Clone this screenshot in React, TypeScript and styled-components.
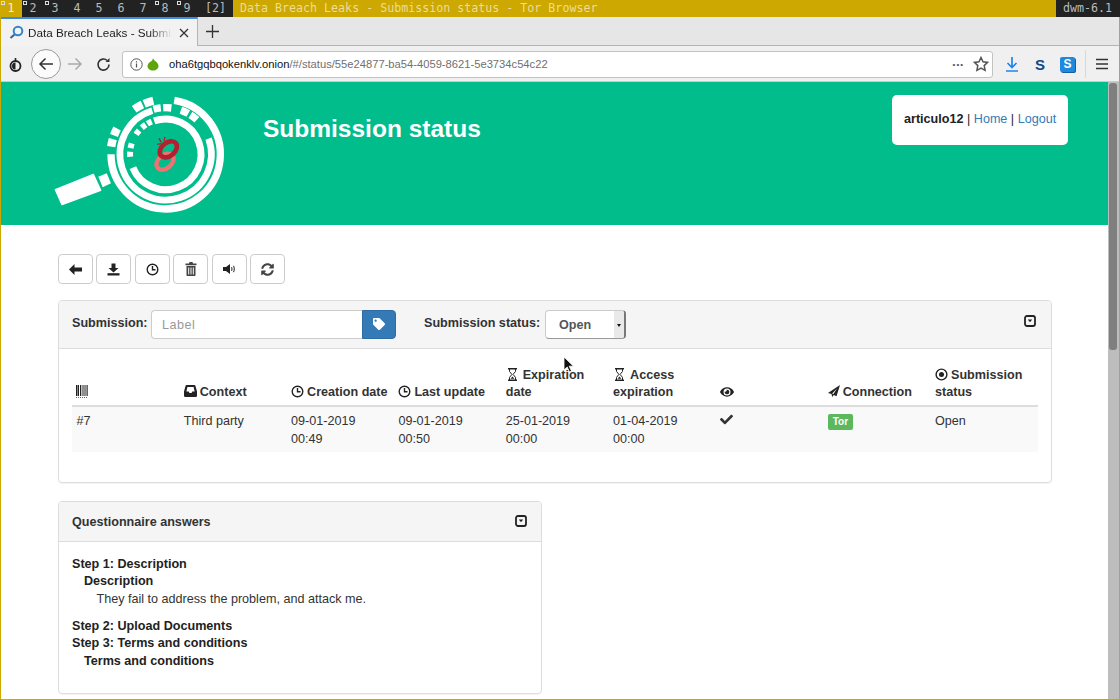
import React from "react";
import styled, { createGlobalStyle } from "styled-components";
import { FaCheck, FaEye, FaSyncAlt, FaTag } from "react-icons/fa";

const GlobalStyle = createGlobalStyle`
  html, body {
    margin: 0;
    padding: 0;
    overflow: hidden;
  }
  * {
    box-sizing: border-box;
  }
  body {
    font-family: "Liberation Sans", Arial, sans-serif;
    font-size: 12.6px;
    color: #333;
  }
`;

const tags = [
  { n: "1", on: true, used: true },
  { n: "2", used: true },
  { n: "3", used: true },
  { n: "4" },
  { n: "5" },
  { n: "6" },
  { n: "7" },
  { n: "8", used: true },
  { n: "9", used: true },
];

const columns = [
  { icon: <BarcodeIcon />, label: "" },
  { icon: <InboxIcon />, label: "Context" },
  { icon: <ClockIcon />, label: "Creation date" },
  { icon: <ClockIcon />, label: "Last update" },
  { icon: <HourglassIcon />, label: "Expiration date" },
  { icon: <HourglassIcon />, label: "Access expiration" },
  { icon: <FaEye size={14} />, label: "" },
  { icon: <SendIcon />, label: "Connection" },
  { icon: <RecordIcon />, label: "Submission status" },
];

function polar(r: number, deg: number) {
  const a = ((deg - 90) * Math.PI) / 180;
  return `${(377 + r * Math.cos(a)).toFixed(1)} ${(208 + r * Math.sin(a)).toFixed(1)}`;
}

function arc(r: number, from: number, to: number) {
  const large = to - from > 180 ? 1 : 0;
  return `M${polar(r, from)} A${r} ${r} 0 ${large} 1 ${polar(r, to)}`;
}

const logoArcs = [
  { r: 164, w: 22, from: 9, to: 270 },
  { r: 137, w: 20, from: 70, to: 343 },
  { r: 106, w: 21, from: 341, to: 608 },
  { r: 165, w: 24, from: 325, to: 335 },
  { r: 165, w: 24, from: 337, to: 347 },
  { r: 165, w: 25, from: 290, to: 298 },
  { r: 165, w: 25, from: 278, to: 286 },
  { r: 140, w: 22, from: 345, to: 354 },
  { r: 140, w: 22, from: 357, to: 367 },
  { r: 140, w: 22, from: 19, to: 29 },
  { r: 140, w: 22, from: 32, to: 42 },
  { r: 107, w: 18, from: 266, to: 274 },
  { r: 107, w: 18, from: 280, to: 288 },
  { r: 107, w: 18, from: 304, to: 312 },
  { r: 107, w: 18, from: 318, to: 326 },
  { r: 107, w: 18, from: 329, to: 337 },
];

function Logo() {
  return (
    <svg width="200" height="135" viewBox="0 0 600 405">
      {logoArcs.map((a, i) => (
        <path key={i} d={arc(a.r, a.from, a.to)} fill="none" stroke="#fff" strokeWidth={a.w} />
      ))}
      <path d="M46 314 L160 268 L182 316 L66 359 Z" fill="#fff" stroke="#fff" strokeWidth="4" strokeLinejoin="round" />
      <path d="M175 275 L200 265 L213 295 L188 307 Z" fill="#fff" />
      <ellipse cx="375" cy="230" rx="29" ry="20" transform="rotate(-40 375 230)" fill="none" stroke="#ee7272" strokeWidth="13" />
      <ellipse cx="385" cy="193" rx="29" ry="20" transform="rotate(-40 385 193)" fill="none" stroke="#b3202e" strokeWidth="14" />
      <path d="M357 160 L364 172 M375 156 L372 168 M351 178 L364 176" stroke="#b3202e" strokeWidth="4" />
    </svg>
  );
}

function ClockIcon() {
  return (
    <svg width="13" height="13" viewBox="0 0 13 13" fill="none" stroke="currentColor" strokeWidth="1.4">
      <circle cx="6.5" cy="6.5" r="5.3" />
      <path d="M6.5 3v3.8h3" />
    </svg>
  );
}

function HourglassIcon() {
  return (
    <svg width="14" height="13" viewBox="-1 0 14 13" fill="none" stroke="currentColor" strokeWidth="1">
      <path d="M1 .8h9M1 12.2h9" strokeWidth="1.4" />
      <path d="M2.5 1v2.400l2.400 3-2.400 3V12M8.500 1v2.400l-2.400 3 2.400 3V12" />
      <path d="M3.500 10.800l2-2.400 2 2.400z" fill="currentColor" stroke="none" />
    </svg>
  );
}

function InboxIcon() {
  return (
    <svg width="13" height="12" viewBox="0 0 13 12">
      <path
        d="M2.600 0h7.800c.5 0 .8.3 1 .7L13 6.500v4c0 .8-.5 1.500-1.200 1.500H1.200C.5 12 0 11.300 0 10.500v-4L1.600.7c.2-.4.5-.7 1-.7zM3.400 2 2.400 6.500h2.400l.6 1.500h2.200l.6-1.500h2.400L9.600 2z"
        fill="currentColor"
        fillRule="evenodd"
      />
    </svg>
  );
}

function RecordIcon() {
  return (
    <svg width="13" height="13" viewBox="0 0 13 13">
      <circle cx="6.5" cy="6.5" r="5.4" fill="none" stroke="currentColor" strokeWidth="1.4" />
      <circle cx="6.5" cy="6.5" r="2.5" fill="currentColor" />
    </svg>
  );
}

function BarcodeIcon() {
  return (
    <svg width="12" height="13" viewBox="0 0 12 13" fill="none" stroke="#222">
      <path d="M.5 0v11M2.500 0v11M4.500 0v11M7 0v11M9 0v11M11.200 0v11" />
      <path d="M1.500 0v11M6 0v11M10.200 0v11" stroke="#888" />
      <path d="M0 12.500h12" stroke="#666" strokeDasharray="1 1" />
    </svg>
  );
}

function SendIcon() {
  return (
    <svg width="12" height="12" viewBox="0 0 12 12">
      <path d="M12 0 0 8l3.500 1L4.200 12l1.600-2 2.700 1.300zM4.200 8.600 9 3.500 5.300 9.300z" fill="currentColor" fillRule="evenodd" />
    </svg>
  );
}

function CollapseIcon() {
  return (
    <svg width="12" height="12" viewBox="0 0 12 12">
      <rect x="1" y="1" width="10" height="10" rx="2" fill="none" stroke="#222" strokeWidth="1.8" />
      <path d="M3.800 4.500h4.400L6 7.300z" fill="#222" />
    </svg>
  );
}

function ArrowLeftIcon() {
  return (
    <svg width="13" height="11" viewBox="0 0 13 11" fill="currentColor">
      <path d="M0 5.500 5.500 0v3.500H13v4H5.500V11z" />
    </svg>
  );
}

function DownloadIcon() {
  return (
    <svg width="13" height="13" viewBox="0 0 13 13" fill="currentColor">
      <path d="M4.500.5h4V5h3L6.500 9.600 1.500 5h3z" />
      <rect x="0.500" y="10.200" width="12" height="2.300" />
    </svg>
  );
}

function TrashIcon() {
  return (
    <svg width="12" height="14" viewBox="0 0 12 14" fill="currentColor">
      <path d="M4.500 0h3l.5 1.500h3.500v1.700H.5V1.500H4zM1.500 4h9v9c0 .6-.4 1-1 1h-7c-.6 0-1-.4-1-1zM3.200 5.500v7h1v-7zm2.300 0v7h1v-7zm2.300 0v7h1v-7z" fillRule="evenodd" />
    </svg>
  );
}

function VolumeIcon() {
  return (
    <svg width="13" height="10" viewBox="0 0 13 10" fill="none">
      <path d="M0 3h3l4-3v10L3 7H0z" fill="currentColor" />
      <path d="M8.500 3c.6.6.6 3.400 0 4M10.500 1.800c1 1.400 1 5 0 6.400" stroke="currentColor" />
    </svg>
  );
}

function OnionIcon({ color }: { color: string }) {
  return (
    <svg width="14" height="14" viewBox="0 0 14 14">
      <path d="M7 1c.4 1.500 1.400 2.500 2.800 3.600C11.500 6 12.500 7.400 12.500 9c0 2.700-2.400 4.500-5.500 4.500S1.500 11.700 1.500 9c0-2.200 2-3.800 4-5C6.300 3.400 6.800 2.300 7 1z" fill={color} />
    </svg>
  );
}

export default function App() {
  return (
    <>
      <GlobalStyle />
      <Screen>
        <StatusBar>
          <Tags>
            {tags.map((t) => (
              <Tag key={t.n} $on={t.on}>
                {t.used && <TagMark />}
                {t.n}
              </Tag>
            ))}
            <Layout>[2]</Layout>
          </Tags>
          <WindowTitle>Data Breach Leaks - Submission status - Tor Browser</WindowTitle>
          <WmName>dwm-6.1</WmName>
        </StatusBar>

        <Browser>
          <TabStrip>
            <ActiveTab>
              <svg width="15" height="15" viewBox="0 0 15 15" fill="none">
                <circle cx="9" cy="6" r="4.3" stroke="#2f86c9" strokeWidth="2" />
                <path d="M5.500 9.500 1.500 13" stroke="#3568a8" strokeWidth="2.200" />
              </svg>
              <TabTitle>Data Breach Leaks - Submis</TabTitle>
              <TabClose viewBox="0 0 10 10">
                <path d="M1 1l8 8M9 1l-8 8" stroke="#333" strokeWidth="1.300" />
              </TabClose>
            </ActiveTab>
            <NewTab viewBox="0 0 13 13">
              <path d="M6.500 0v13M0 6.500h13" stroke="#333" strokeWidth="1.300" />
            </NewTab>
          </TabStrip>

          <NavBar>
            <svg width="15" height="15" viewBox="0 0 15 15" fill="none">
              <circle cx="7.500" cy="9" r="5" stroke="#222" strokeWidth="1.800" />
              <path d="M7.500 5.500a3.500 3.500 0 0 0 0 7z" fill="#222" />
              <path d="M7.500 1v3" stroke="#222" strokeWidth="1.600" />
            </svg>
            <BackButton>
              <svg width="16" height="14" viewBox="0 0 16 14" fill="none" stroke="#333" strokeWidth="1.500">
                <path d="M15 7H2M7.500 1.500 2 7l5.500 5.500" />
              </svg>
            </BackButton>
            <ForwardIcon width="16" height="14" viewBox="0 0 16 14" fill="none" stroke="#aaa" strokeWidth="1.500">
              <path d="M1 7h13M8.500 1.500 14 7l-5.500 5.500" />
            </ForwardIcon>
            <ReloadIcon width="15" height="15" viewBox="0 0 15 15" fill="none" stroke="#333" strokeWidth="1.600">
              <path d="M13 7.500a5.500 5.500 0 1 1-1.800-4" />
              <path d="M13.500 1v4h-4" fill="#333" stroke="none" />
            </ReloadIcon>
            <UrlBar>
              <svg width="13" height="13" viewBox="0 0 13 13" fill="none">
                <circle cx="6.500" cy="6.500" r="5.700" stroke="#555" />
                <path d="M6.500 5.500v4M6.500 3.200v1.200" stroke="#555" strokeWidth="1.200" />
              </svg>
              <OnionIcon color="#5da40f" />
              <UrlText>
                oha6tgqbqokenklv.onion<UrlPath>/#/status/55e24877-ba54-4059-8621-5e3734c54c22</UrlPath>
              </UrlText>
              <UrlDots>•••</UrlDots>
              <svg width="16" height="16" viewBox="0 0 16 16" fill="none" stroke="#555" strokeWidth="1.500">
                <path d="M8 1.500l2 4.300 4.600.6-3.400 3.200.9 4.700L8 12l-4.100 2.300.9-4.700L1.400 6.400 6 5.800z" />
              </svg>
            </UrlBar>
            <ToolIcons>
              <svg width="14" height="15" viewBox="0 0 14 15" fill="none" stroke="#1c86ee" strokeWidth="1.700">
                <path d="M7 0v10M2.500 6 7 10.500 11.500 6M1 14h12" />
              </svg>
              <PlainS>S</PlainS>
              <SquareS>S</SquareS>
              <ToolDivider />
              <Hamburger viewBox="0 0 12 12">
                <path d="M0 1.500h12M0 6h12M0 10.500h12" stroke="#333" strokeWidth="1.400" />
              </Hamburger>
            </ToolIcons>
          </NavBar>

          <Viewport>
            <Page>
              <Header>
                <LogoWrap>
                  <Logo />
                </LogoWrap>
                <PageTitle>Submission status</PageTitle>
                <UserBox>
                  <b>articulo12</b> | <UserLink>Home</UserLink> | <UserLink>Logout</UserLink>
                </UserBox>
              </Header>

              <Content>
                <ActionRow>
                  <ActionButton><ArrowLeftIcon /></ActionButton>
                  <ActionButton><DownloadIcon /></ActionButton>
                  <ActionButton><ClockIcon /></ActionButton>
                  <ActionButton $muted><TrashIcon /></ActionButton>
                  <ActionButton><VolumeIcon /></ActionButton>
                  <ActionButton $muted><FaSyncAlt size={13} /></ActionButton>
                </ActionRow>

                <Card>
                  <SubmissionHeader>
                    <FormLabel>Submission:</FormLabel>
                    <LabelField>
                      <LabelInput>Label</LabelInput>
                      <TagButton><FaTag size={12} /></TagButton>
                    </LabelField>
                    <StatusLabel>Submission status:</StatusLabel>
                    <SelectBox>
                      <SelectValue>Open</SelectValue>
                      <SelectArrow />
                    </SelectBox>
                    <HeaderToggle $lift={6}><CollapseIcon /></HeaderToggle>
                  </SubmissionHeader>
                  <TableBody>
                    <StatusTable>
                      <thead>
                        <tr>
                          {columns.map((c, i) => (
                            <HeadCell key={i}>
                              <HeadIcon>{c.icon}</HeadIcon>
                              {c.label}
                            </HeadCell>
                          ))}
                        </tr>
                      </thead>
                      <tbody>
                        <tr>
                          <Cell>#7</Cell>
                          <Cell>Third party</Cell>
                          <Cell>09-01-2019<br />00:49</Cell>
                          <Cell>09-01-2019<br />00:50</Cell>
                          <Cell>25-01-2019<br />00:00</Cell>
                          <Cell>01-04-2019<br />00:00</Cell>
                          <Cell><FaCheck size={13} /></Cell>
                          <Cell><TorBadge>Tor</TorBadge></Cell>
                          <Cell>Open</Cell>
                        </tr>
                      </tbody>
                    </StatusTable>
                  </TableBody>
                </Card>

                <AnswersCard>
                  <AnswersHeader>
                    <AnswersTitle>Questionnaire answers</AnswersTitle>
                    <HeaderToggle $lift={1}><CollapseIcon /></HeaderToggle>
                  </AnswersHeader>
                  <AnswersBody>
                    <StepTitle>Step 1: Description</StepTitle>
                    <Question>Description</Question>
                    <Answer>They fail to address the problem, and attack me.</Answer>
                    <StepTitle>Step 2: Upload Documents</StepTitle>
                    <StepTitle>Step 3: Terms and conditions</StepTitle>
                    <Question>Terms and conditions</Question>
                  </AnswersBody>
                </AnswersCard>
              </Content>
            </Page>
            <Scrollbar>
              <ScrollThumb />
            </Scrollbar>
            <MouseCursor width="12" height="18" viewBox="0 0 12 18">
              <path d="M1 1v13l3.200-3 2.300 5 2-1-2.300-4.800H10.500z" fill="#111" stroke="#fff" strokeWidth="0.800" />
            </MouseCursor>
          </Viewport>
        </Browser>
      </Screen>
    </>
  );
}

const Screen = styled.div`
  width: 1120px;
  height: 700px;
  display: flex;
  flex-direction: column;
  background: #cca800;
  overflow: hidden;
`;

const StatusBar = styled.div`
  height: 17px;
  flex: none;
  display: flex;
  font-family: "DejaVu Sans Mono", monospace;
  font-size: 11.65px;
  line-height: 17px;
`;

const Tags = styled.div`
  width: 233px;
  display: flex;
  background: #222;
  color: #bbb;
`;

const Tag = styled.div<{ $on?: boolean }>`
  position: relative;
  width: 22px;
  text-align: center;
  background: ${(p) => (p.$on ? "#cca800" : "transparent")};
  color: ${(p) => (p.$on ? "#eee" : "#bbb")};
`;

const TagMark = styled.span`
  position: absolute;
  top: 1px;
  left: 1px;
  width: 4px;
  height: 4px;
  border: 1px solid #ddd;
`;

const Layout = styled.div`
  margin-left: 7px;
`;

const WindowTitle = styled.div`
  flex: 1;
  padding-left: 7px;
  color: #eedc96;
`;

const WmName = styled.div`
  width: 64px;
  padding-left: 7px;
  background: #222;
  color: #bbb;
`;

const Browser = styled.div`
  flex: 1;
  min-height: 0;
  margin: 0 1px 1px;
  display: flex;
  flex-direction: column;
  background: #fff;
`;

const TabStrip = styled.div`
  height: 29px;
  flex: none;
  display: flex;
  align-items: center;
  background: #e6e6e6;
  border-bottom: 1px solid #b4b4b4;
`;

const ActiveTab = styled.div`
  width: 197px;
  height: 29px;
  display: flex;
  align-items: center;
  gap: 4px;
  padding: 1px 8px 0;
  background: #f2f2f2;
  border-top: 2px solid #3e8ae0;
  border-right: 1px solid #b4b4b4;
  font-size: 11.7px;
  color: #222;
`;

const TabTitle = styled.span`
  flex: 1;
  min-width: 0;
  white-space: nowrap;
  mask-image: linear-gradient(to right, #000 82%, transparent 98%);
`;

const TabClose = styled.svg`
  width: 10px;
  height: 10px;
  flex: none;
`;

const NewTab = styled.svg`
  width: 13px;
  height: 13px;
  margin-left: 8px;
`;

const NavBar = styled.div`
  height: 36px;
  flex: none;
  display: flex;
  align-items: center;
  padding: 1px 0 0 7px;
  background: #f0f0f0;
  border-bottom: 1px solid #ccc;
`;

const BackButton = styled.div`
  width: 30px;
  height: 30px;
  margin-left: 8px;
  display: flex;
  align-items: center;
  justify-content: center;
  background: #fbfbfb;
  border: 1px solid #9a9a9a;
  border-radius: 50%;
`;

const ForwardIcon = styled.svg`
  margin-left: 6px;
`;

const ReloadIcon = styled.svg`
  margin-left: 13px;
`;

const UrlBar = styled.div`
  width: 871px;
  height: 27px;
  margin-left: 11px;
  display: flex;
  align-items: center;
  gap: 3px;
  padding: 0 3px 0 7px;
  background: #fff;
  border: 1px solid #c2c2c2;
  border-radius: 3px;
`;

const UrlText = styled.div`
  flex: 1;
  margin-left: 6px;
  font-size: 11.2px;
  color: #111;
  white-space: nowrap;
`;

const UrlPath = styled.span`
  color: #707070;
`;

const UrlDots = styled.span`
  margin-right: 6px;
  font-size: 8px;
  letter-spacing: 1px;
  color: #555;
`;

const ToolIcons = styled.div`
  display: flex;
  align-items: center;
  margin-left: 12px;
`;

const PlainS = styled.span`
  width: 16px;
  margin-left: 13px;
  font-size: 15px;
  font-weight: 700;
  text-align: center;
  color: #0d4a8c;
`;

const SquareS = styled.span`
  width: 15px;
  height: 15px;
  margin-left: 12px;
  background: #2189dd;
  box-shadow: 1px 1px 0 #135f9f;
  border-radius: 2px;
  color: #fff;
  font-size: 12px;
  font-weight: 700;
  line-height: 15px;
  text-align: center;
`;

const ToolDivider = styled.span`
  width: 1px;
  height: 28px;
  margin-left: 10px;
  background: #d8d8d8;
`;

const Hamburger = styled.svg`
  width: 12px;
  height: 12px;
  margin-left: 10px;
`;

const Viewport = styled.div`
  position: relative;
  flex: 1;
  min-height: 0;
  display: flex;
`;

const Page = styled.div`
  flex: 1;
  min-width: 0;
  overflow: hidden;
`;

const Scrollbar = styled.div`
  width: 11px;
  flex: none;
  padding: 0 1px;
  background: #bdbdbd;
`;

const ScrollThumb = styled.div`
  width: 8px;
  height: 267px;
  margin-top: 1px;
  background: #7f7f7f;
  border-radius: 3px;
`;

const MouseCursor = styled.svg`
  position: absolute;
  left: 562px;
  top: 274px;
`;

const Header = styled.header`
  height: 143px;
  display: flex;
  align-items: flex-start;
  background: #00bd8b;
`;

const LogoWrap = styled.div`
  width: 262px;
  padding: 3px 0 0 39px;
`;

const PageTitle = styled.h1`
  flex: 1;
  margin: 33px 0 0;
  font-size: 24.5px;
  font-weight: 700;
  line-height: 28px;
  color: #fff;
`;

const UserBox = styled.div`
  width: 176px;
  height: 50px;
  margin: 13px 40px 0 0;
  padding: 15.5px 12px;
  background: #fff;
  border-radius: 5px;
  color: #222;
  line-height: 17.5px;
  white-space: nowrap;
`;

const UserLink = styled.a`
  color: #337ab7;
`;

const Content = styled.main`
  padding: 29px 56px 0 57px;
`;

const ActionRow = styled.div`
  display: flex;
  gap: 3.4px;
  margin-bottom: 16px;
`;

const ActionButton = styled.button<{ $muted?: boolean }>`
  width: 35px;
  height: 30px;
  padding: 0;
  display: flex;
  align-items: center;
  justify-content: center;
  background: #fff;
  border: 1px solid #ccc;
  border-radius: 4px;
  color: ${(p) => (p.$muted ? "#444" : "#222")};
`;

const Card = styled.section`
  border: 1px solid #ddd;
  border-radius: 4px;
  box-shadow: 0 1px 1px rgba(0, 0, 0, 0.05);
  overflow: hidden;
`;

const SubmissionHeader = styled.div`
  height: 48px;
  display: flex;
  align-items: center;
  padding: 0 15px 1px 13px;
  background: #f5f5f5;
  border-bottom: 1px solid #ddd;
`;

const FormLabel = styled.span`
  width: 79px;
  margin-top: -3px;
  font-weight: 700;
`;

const LabelField = styled.div`
  display: flex;
  height: 29px;
`;

const LabelInput = styled.div`
  width: 211px;
  padding: 0 10px;
  background: #fff;
  border: 1px solid #ccc;
  border-right: 0;
  border-radius: 4px 0 0 4px;
  color: #999;
  letter-spacing: 0.5px;
  line-height: 29px;
`;

const TagButton = styled.div`
  width: 34px;
  display: flex;
  align-items: center;
  justify-content: center;
  background: #337ab7;
  border: 1px solid #2e6da4;
  border-radius: 0 4px 4px 0;
  color: #fff;
`;

const StatusLabel = styled.span`
  width: 121px;
  margin: -3px 0 0 28px;
  font-weight: 700;
`;

const SelectBox = styled.div`
  width: 81px;
  height: 29px;
  display: flex;
  background: #fff;
  border: 1px solid #ccc;
  border-right: 2px solid #777;
  border-bottom-color: #999;
  border-radius: 4px;
  overflow: hidden;
`;

const SelectValue = styled.span`
  flex: 1;
  padding-left: 13px;
  font-weight: 700;
  color: #555;
  line-height: 28px;
`;

const SelectArrow = styled.span`
  position: relative;
  width: 10px;
  background: #e9e9e9;

  &::after {
    content: "";
    position: absolute;
    left: 3px;
    top: 13px;
    border-top: 3px solid #111;
    border-left: 2.5px solid transparent;
    border-right: 2.5px solid transparent;
  }
`;

const HeaderToggle = styled.span<{ $lift: number }>`
  display: flex;
  margin-left: auto;
  margin-top: ${(p) => -p.$lift}px;
`;

const TableBody = styled.div`
  padding: 13.5px 13px 30px;
`;

const StatusTable = styled.table`
  width: 100%;
  table-layout: fixed;
  border-collapse: collapse;
  border-spacing: 0;
`;

const HeadCell = styled.th`
  padding: 4.4px 4.4px 3.4px;
  border-bottom: 2px solid #ddd;
  font-weight: 700;
  line-height: 17.5px;
  text-align: left;
  vertical-align: bottom;
`;

const HeadIcon = styled.span`
  display: inline-block;
  height: 12px;
  margin-right: 3px;
  line-height: 0;
  vertical-align: -1px;
  color: #222;

  svg {
    display: block;
  }
`;

const Cell = styled.td`
  padding: 5.9px 4.4px 3.4px;
  background: #f9f9f9;
  line-height: 17.5px;
  vertical-align: top;
`;

const TorBadge = styled.span`
  display: inline-block;
  padding: 0 5px;
  background: #5cb85c;
  border-radius: 2px;
  color: #fff;
  font-size: 10px;
  font-weight: 700;
  line-height: 16px;
`;

const AnswersCard = styled(Card)`
  width: 484px;
  height: 193px;
  margin-top: 18.5px;
`;

const AnswersHeader = styled.div`
  height: 40px;
  display: flex;
  align-items: center;
  padding: 0 14px 0 13px;
  background: #f5f5f5;
  border-bottom: 1px solid #ddd;
`;

const AnswersTitle = styled.h3`
  margin: 0;
  font-size: 12.6px;
  font-weight: 700;
`;

const AnswersBody = styled.div`
  padding: 13.5px 13px;
  line-height: 17.5px;
  color: #222;
`;

const StepTitle = styled.div`
  font-weight: 700;
`;

const Question = styled.div`
  padding-left: 12px;
  font-weight: 700;
`;

const Answer = styled.div`
  padding-left: 24.5px;
  margin-bottom: 9.5px;
  color: #333;
`;
